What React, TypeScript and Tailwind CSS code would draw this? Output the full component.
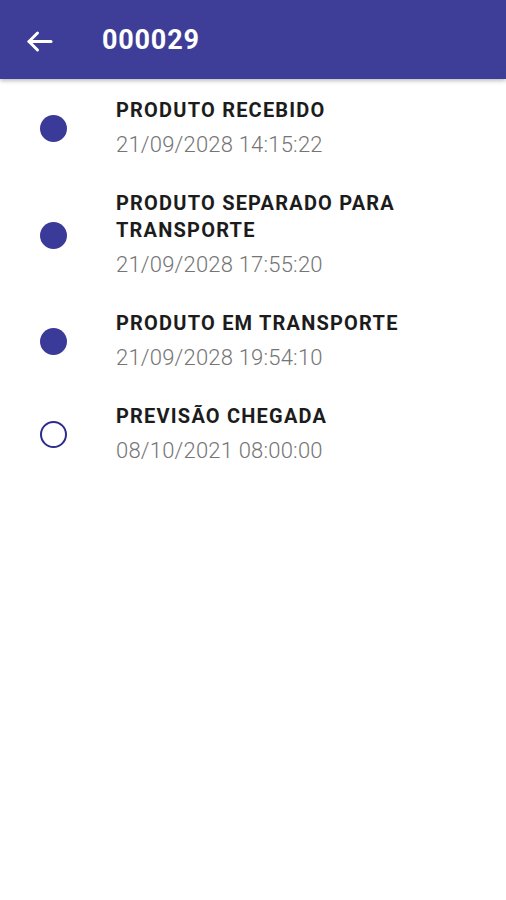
const steps = [
  { title: "PRODUTO RECEBIDO", date: "21/09/2028 14:15:22", done: true },
  { title: "PRODUTO SEPARADO PARA TRANSPORTE", date: "21/09/2028 17:55:20", done: true },
  { title: "PRODUTO EM TRANSPORTE", date: "21/09/2028 19:54:10", done: true },
  { title: "PREVISÃO CHEGADA", date: "08/10/2021 08:00:00", done: false },
];

function BackArrow() {
  return (
    <svg width="27" height="23" viewBox="0 0 27 23" fill="none" stroke="white" strokeWidth="3" strokeLinecap="round" strokeLinejoin="round">
      <path d="M25 11.5H3" />
      <path d="M11.5 3L3 11.5 11.5 20" />
    </svg>
  );
}

export default function App() {
  return (
    <div className="min-h-[900px] bg-white" style={{ fontFamily: "Roboto, 'Liberation Sans', sans-serif" }}>
      <header className="h-[79px] bg-[#3e3e98] flex items-center shadow-[0_2px_4px_rgba(0,0,0,0.25)]">
        <div className="w-[102px] shrink-0 flex pl-[26px] pt-[3px]">
          <BackArrow />
        </div>
        <h1 className="text-white font-bold text-[27px] leading-none tracking-[0.8px] pt-[2px]">000029</h1>
      </header>
      <ul className="pt-[18px] flex flex-col gap-[30px]">
        {steps.map((s) => (
          <li key={s.title} className="flex items-center">
            <div className="w-[116px] shrink-0 flex pl-[40px]">
              {s.done ? (
                <span className="w-[27px] h-[27px] rounded-full bg-[#3a3a98]" />
              ) : (
                <span className="w-[27px] h-[27px] rounded-full border-2 border-[#2c2c8e] bg-white" />
              )}
            </div>
            <div className="pr-[20px]">
              <div className="text-[20px] font-bold text-[#1c1c1c] leading-[27px] tracking-[1.2px]">{s.title}</div>
              <div className="text-[22px] font-light text-[#757575] leading-[30px] mt-[6px] tracking-[0.2px]">{s.date}</div>
            </div>
          </li>
        ))}
      </ul>
    </div>
  );
}
